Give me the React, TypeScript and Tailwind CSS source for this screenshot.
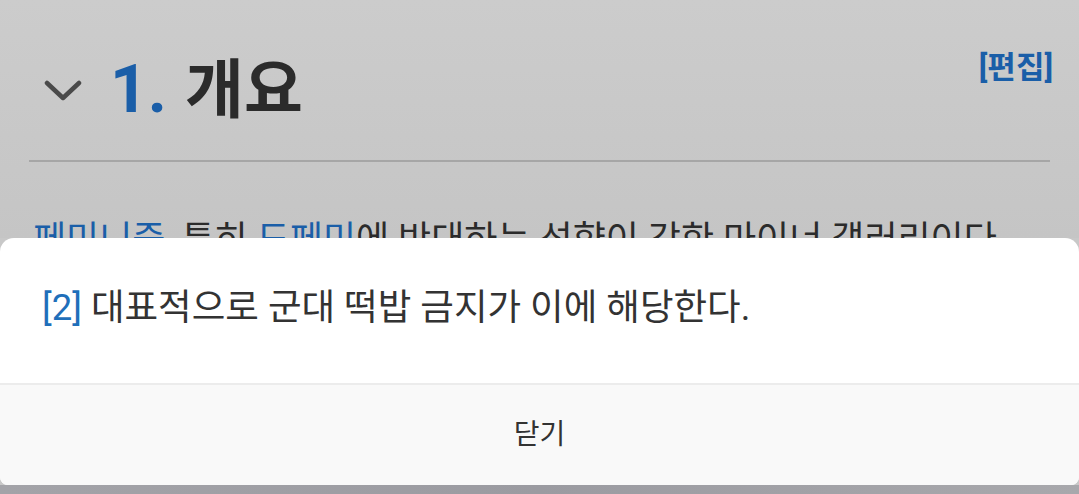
import React from "react";

const font = { fontFamily: 'Roboto, "Noto Sans CJK KR", sans-serif' };

function Chevron() {
  return (
    <svg width="38" height="24" viewBox="0 0 38 24" fill="none" className="shrink-0">
      <path d="M3 4 L19 19 L35 4" stroke="#4a4a4a" strokeWidth="4.5" strokeLinecap="round" strokeLinejoin="round" />
    </svg>
  );
}

export default function App() {
  return (
    <div className="w-[1079px] h-[494px] flex flex-col overflow-hidden bg-[#c8c8c8]" style={font}>
      {/* dimmed page behind the popup */}
      <div className="h-[238px] shrink-0 overflow-hidden bg-gradient-to-b from-[#cccccc] to-[#c5c5c5] px-[29px]">
        <div className="flex items-start justify-between pt-[50px]">
          <div className="flex items-center gap-[28px] pl-[15px]">
            <Chevron />
            <div className="flex items-baseline">
              <span className="text-[66px] leading-[80px] font-bold text-[#1a5ea8]">1.</span>
              <span className="ml-[18px] text-[64px] leading-[80px] font-bold text-[#2b2b2b]">개요</span>
            </div>
          </div>
          <span className="text-[31px] leading-[36px] font-bold text-[#1a5ea8] mt-[0px] mr-[-3px]">[편집]</span>
        </div>
        <div className="mt-[29px] h-[2px] bg-[#a6a6a6]" />
        <p className="mt-[56px] pl-[4px] text-[36px] leading-[44px] whitespace-nowrap text-[#2b2b2b]">
          <span className="text-[#1a5ea8]">페미니즘</span>, 특히 <span className="text-[#1a5ea8]">도페미</span>에 반대하는 성향이 강한 마이너 갤러리이다
        </p>
      </div>

      {/* footnote popup */}
      <div className="shrink-0 bg-white rounded-t-[14px] rounded-b-[8px] overflow-hidden">
        <div className="h-[145px] flex items-center pl-[42px] pb-[4px]">
          <p className="text-[36.5px] text-[#333333] whitespace-nowrap">
            <span className="text-[#1f6fba]">[2]</span> 대표적으로 군대 떡밥 금지가 이에 해당한다.
          </p>
        </div>
        <div className="h-[2px] bg-[#ececec]" />
        <button className="w-full h-[100px] bg-[#f9f9f9] flex items-center justify-center text-[28px] text-[#333333]">
          닫기
        </button>
      </div>

      <div className="flex-1 bg-gradient-to-r from-[#a3a3a8] via-[#9b9ba1] to-[#a8a8ac]" />
    </div>
  );
}
